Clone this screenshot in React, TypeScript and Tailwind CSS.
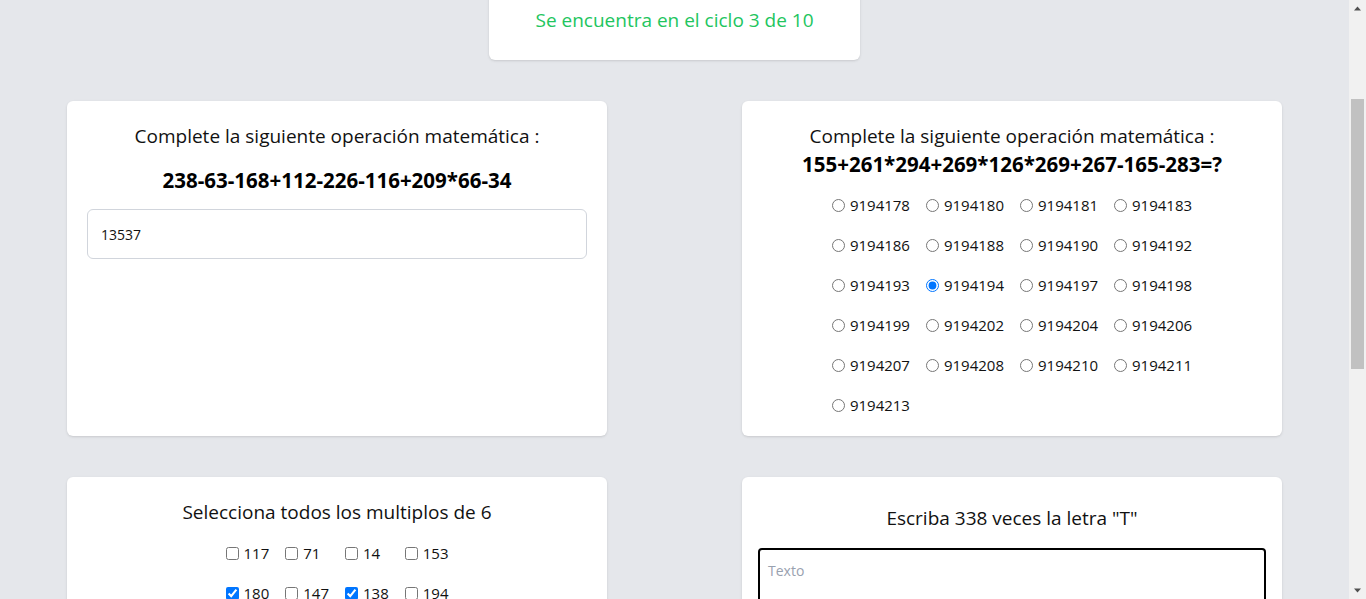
import { useLayoutEffect, useState } from 'react';

const radioOptions = [
  '9194178', '9194180', '9194181', '9194183',
  '9194186', '9194188', '9194190', '9194192',
  '9194193', '9194194', '9194197', '9194198',
  '9194199', '9194202', '9194204', '9194206',
  '9194207', '9194208', '9194210', '9194211',
  '9194213',
];

const numbers = [117, 71, 14, 153, 180, 147, 138, 194];

function Scrollbar() {
  return (
    <div className="fixed right-0 top-0 flex h-[599px] w-[17px] flex-col items-center bg-[#f1f1f1]">
      <svg width="9" height="17" viewBox="0 0 9 17" className="shrink-0">
        <path d="M1 10.5 L4.5 6.5 L8 10.5 Z" fill="#505050" />
      </svg>
      <div className="mt-[82px] h-[270px] w-[13px] bg-[#c1c1c1]" />
      <div className="flex-1" />
      <svg width="9" height="17" viewBox="0 0 9 17" className="shrink-0">
        <path d="M1 6.5 L4.5 10.5 L8 6.5 Z" fill="#505050" />
      </svg>
    </div>
  );
}

export default function App() {
  const [answer, setAnswer] = useState('13537');
  const [choice, setChoice] = useState('9194194');
  const [checked, setChecked] = useState<number[]>([180, 138]);
  const [texto, setTexto] = useState('');

  // the page is shown scrolled down a bit
  useLayoutEffect(() => {
    window.scrollTo(0, 180);
  }, []);

  const toggle = (n: number) => {
    setChecked(checked.includes(n) ? checked.filter((c) => c !== n) : [...checked, n]);
  };

  return (
    <div className="min-h-[1253px] bg-[#e5e7eb] pr-[17px] pt-[160px] font-['Open_Sans',sans-serif] text-[#111]">
      <div className="mx-auto w-[371px] rounded-md bg-white py-[26px] text-center text-[19px] leading-7 text-[#22c55e] shadow">
        Se encuentra en el ciclo 3 de 10
      </div>

      <div className="mx-auto mt-[41px] grid w-[1215px] grid-cols-2 gap-x-[135px] gap-y-[41px]">
        <div className="rounded-md bg-white px-5 pb-[19px] pt-[21px] text-center shadow">
          <p className="text-[19px] leading-7">Complete la siguiente operación matemática :</p>
          <p className="mt-[16px] text-[20.5px] font-bold leading-7 text-black">238-63-168+112-226-116+209*66-34</p>
          <input
            type="text"
            className="mt-[15px] h-[50px] w-full rounded-md border border-gray-300 px-[13px] text-sm outline-none"
            value={answer}
            onChange={(e) => setAnswer(e.target.value)}
          />
        </div>

        <div className="rounded-md bg-white px-5 pb-[19px] pt-[21px] text-center shadow">
          <p className="text-[19px] leading-7">Complete la siguiente operación matemática :</p>
          <p className="text-[20.5px] font-bold leading-7 text-black">155+261*294+269*126*269+267-165-283=?</p>
          <div className="mt-[15px] grid grid-cols-[repeat(4,auto)] justify-center gap-x-4 gap-y-4">
            {radioOptions.map((opt) => (
              <label key={opt} className="flex h-6 items-center gap-[5px] text-[15px]">
                <input
                  type="radio"
                  name="op2"
                  checked={choice === opt}
                  onChange={() => setChoice(opt)}
                />
                {opt}
              </label>
            ))}
          </div>
        </div>

        <div className="min-h-[335px] rounded-md bg-white p-5 pt-[21px] text-center shadow">
          <p className="text-[19px] leading-7">Selecciona todos los multiplos de 6</p>
          <div className="mt-[15px] grid grid-cols-[repeat(4,auto)] justify-center gap-x-4 gap-y-4">
            {numbers.map((n) => (
              <label key={n} className="flex h-6 items-center gap-[5px] text-[15px]">
                <input type="checkbox" checked={checked.includes(n)} onChange={() => toggle(n)} />
                {n}
              </label>
            ))}
          </div>
        </div>

        <div className="min-h-[335px] rounded-md bg-white px-4 pb-5 pt-[27px] text-center shadow">
          <p className="text-[19px] leading-7">Escriba 338 veces la letra "T"</p>
          <textarea
            className="mt-4 block h-[200px] w-full resize-none rounded-sm border-2 border-black px-2 pt-[11px] text-left text-sm outline-none placeholder:text-gray-400"
            placeholder="Texto"
            value={texto}
            onChange={(e) => setTexto(e.target.value)}
          />
        </div>
      </div>

      <Scrollbar />
    </div>
  );
}
